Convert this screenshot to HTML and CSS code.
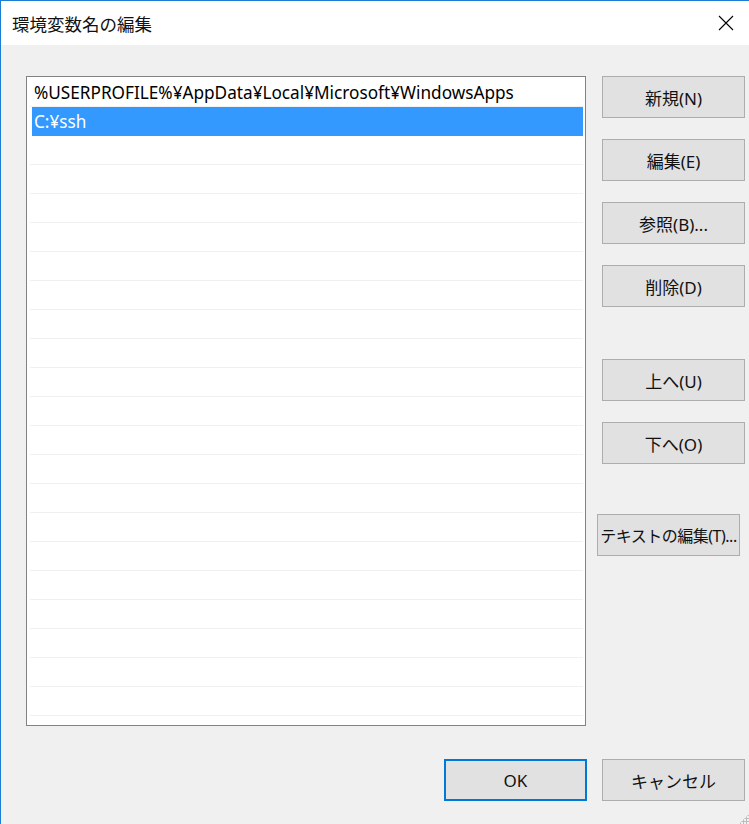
FILE: index.html
```html
<!DOCTYPE html>
<html lang="ja">
<head>
    <meta charset="UTF-8">
    <title>環境変数名の編集</title>
    <link rel="stylesheet" href="styles.css">
</head>
<body>
    <div class="window">
        <div class="title-bar">
            <span class="title">環境変数名の編集</span>
            <svg class="close" width="16" height="16" viewBox="0 0 16 16">
                <path d="M1 1 L15 15 M15 1 L1 15" stroke="#000" stroke-width="1.1" fill="none"/>
            </svg>
        </div>

        <div class="content">
            <div class="main">
                <div class="path-list">
                    <div class="row">%USERPROFILE%¥AppData¥Local¥Microsoft¥WindowsApps</div>
                    <div class="row selected">C:¥ssh</div>
                    <div class="row"></div>
                    <div class="row"></div>
                    <div class="row"></div>
                    <div class="row"></div>
                    <div class="row"></div>
                    <div class="row"></div>
                    <div class="row"></div>
                    <div class="row"></div>
                    <div class="row"></div>
                    <div class="row"></div>
                    <div class="row"></div>
                    <div class="row"></div>
                    <div class="row"></div>
                    <div class="row"></div>
                    <div class="row"></div>
                    <div class="row"></div>
                    <div class="row"></div>
                    <div class="row"></div>
                    <div class="row"></div>
                    <div class="row"></div>
                </div>

                <div class="side-buttons">
                    <button class="btn">新規(N)</button>
                    <button class="btn">編集(E)</button>
                    <button class="btn">参照(B)...</button>
                    <button class="btn">削除(D)</button>
                    <button class="btn group-gap">上へ(U)</button>
                    <button class="btn">下へ(O)</button>
                    <button class="btn text-edit">テキストの編集(T)...</button>
                </div>
            </div>

            <div class="footer">
                <button class="btn default">OK</button>
                <button class="btn">キャンセル</button>
            </div>
        </div>

        <div class="grip"></div>
    </div>
</body>
</html>
```

FILE: styles.css
```css
html, body {
    margin: 0;
    padding: 0;
}

body {
    width: 749px;
    height: 824px;
    overflow: hidden;
    font-family: "Noto Sans", "Noto Sans CJK JP", sans-serif;
    font-size: 16px;
    color: #000;
    background-color: #f0f0f0;
}

.window {
    position: relative;
    height: 823px;
    border-top: 1px solid #1a7fd4;
    border-left: 1px solid #1a7fd4;
    background-color: #f0f0f0;
}

.title-bar {
    height: 44px;
    background-color: #fff;
    display: flex;
    align-items: center;
    justify-content: space-between;
    padding: 0 15px 0 11px;
}

.title {
    font-family: "Noto Sans CJK JP", sans-serif;
    font-size: 17.5px;
    color: #111;
}

.close {
    display: block;
}

.content {
    padding: 31px 4px 0 25px;
}

.main {
    display: flex;
    align-items: flex-start;
}

.path-list {
    width: 559px;
    height: 647px;
    border: 1px solid #828282;
    background-color: #fff;
    padding: 1px 2px 0 2px;
    overflow: hidden;
}

.row {
    height: 28px;
    line-height: 29px;
    font-size: 17.2px;
    border-bottom: 1px solid #f0f0f0;
    margin-left: 1px;
    padding-left: 4px;
    white-space: nowrap;
}

.row.selected {
    background-color: #3399ff;
    color: #fff;
    margin-left: 3px;
    padding-left: 2px;
    border-bottom-color: #3399ff;
}

.side-buttons {
    display: flex;
    flex-direction: column;
    align-items: flex-end;
    gap: 21px;
    margin-left: 16px;
    width: 143px;
}

.btn {
    width: 143px;
    height: 42px;
    background-color: #e1e1e1;
    border: 1px solid #adadad;
    border-radius: 0;
    font-family: "Noto Sans", "Noto Sans CJK JP", sans-serif;
    font-size: 17px;
    color: #111;
    padding: 0;
    margin: 0;
}

.group-gap {
    margin-top: 31px;
}

.text-edit {
    margin-top: 29px;
    margin-right: 5px;
    font-size: 16px;
    letter-spacing: -0.5px;
}

.footer {
    display: flex;
    justify-content: flex-end;
    gap: 15px;
    margin-top: 33px;
}

.btn.default {
    border: 2px solid #0078d7;
}

.grip {
    position: absolute;
    right: 0;
    bottom: 0;
    width: 10px;
    height: 10px;
    background-image: radial-gradient(circle, #bdbdbd 1px, transparent 1.2px);
    background-size: 3px 3px;
    clip-path: polygon(100% 0, 100% 100%, 0 100%);
}
```
